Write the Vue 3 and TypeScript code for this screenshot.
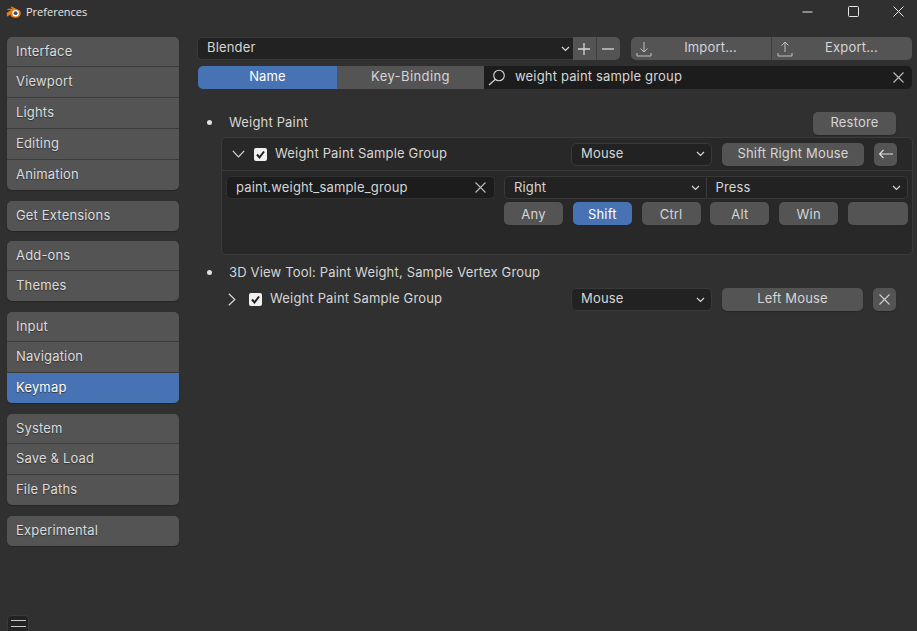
<script setup lang="ts">
const navGroups: { label: string; active?: boolean }[][] = [
  [{ label: 'Interface' }, { label: 'Viewport' }, { label: 'Lights' }, { label: 'Editing' }, { label: 'Animation' }],
  [{ label: 'Get Extensions' }],
  [{ label: 'Add-ons' }, { label: 'Themes' }],
  [{ label: 'Input' }, { label: 'Navigation' }, { label: 'Keymap', active: true }],
  [{ label: 'System' }, { label: 'Save & Load' }, { label: 'File Paths' }],
  [{ label: 'Experimental' }],
]
const modifiers = [
  { label: 'Any', on: false },
  { label: 'Shift', on: true },
  { label: 'Ctrl', on: false },
  { label: 'Alt', on: false },
  { label: 'Win', on: false },
  { label: '', on: false },
]
</script>

<template>
  <div class="window">
    <header class="titlebar">
      <svg class="logo" width="16" height="14" viewBox="0 0 16 14">
        <path d="M0.5 8 L5 5 L1.5 5 Q1 3.8 2 3.8 L6.5 3.8 L4.8 2.4 Q4.6 1.4 5.6 1.6 L10.5 4 Q14.8 5 14.8 8.2 Q14.4 12.6 9.6 12.8 Q5 13 4.4 9.6 L1.4 11.6 Q0 10.6 1 9.6 Z" fill="#e87d0d" />
        <circle cx="9.6" cy="8.2" r="3.2" fill="#fff" />
        <circle cx="9.6" cy="8.2" r="1.9" fill="#265787" />
      </svg>
      <span class="app-title">Preferences</span>
      <div class="winctl">
        <svg width="11" height="11" viewBox="0 0 11 11"><path d="M.5 6H10.500" stroke="#e6e6e6" fill="none" /></svg>
        <svg width="11" height="11" viewBox="0 0 11 11"><rect x=".5" y=".5" width="10" height="10" rx="1" stroke="#e6e6e6" fill="none" /></svg>
        <svg width="11" height="11" viewBox="0 0 11 11"><path d="M.5 .5L10.500 10.500M10.500 .5L.5 10.500" stroke="#e6e6e6" fill="none" /></svg>
      </div>
    </header>

    <div class="body">
      <aside class="sidebar">
        <div v-for="(group, i) in navGroups" :key="i" class="nav-group">
          <div v-for="item in group" :key="item.label" class="nav-item" :class="{ active: item.active }">{{ item.label }}</div>
        </div>
        <div class="hamburger">
          <svg width="15" height="8" viewBox="0 0 15 8"><path d="M0 .5H15M0 6.500H15" stroke="#c8c8c8" fill="none" /></svg>
        </div>
      </aside>

      <main class="content">
        <div class="toolbar">
          <div class="preset">
            <span>Blender</span>
            <svg class="caret" width="9" height="6" viewBox="0 0 9 6"><path d="M1 1L4.500 4.500L8 1" stroke="#d8d8d8" stroke-width="1.200" fill="none" /></svg>
          </div>
          <div class="pm">
            <button class="pm-btn"><svg width="14" height="14" viewBox="0 0 14 14"><path d="M7 1V13M1 7H13" stroke="#d8d8d8" stroke-width="1.300" fill="none" /></svg></button>
            <button class="pm-btn"><svg width="14" height="14" viewBox="0 0 14 14"><path d="M1 7H13" stroke="#d8d8d8" stroke-width="1.300" fill="none" /></svg></button>
          </div>
          <div class="io">
            <button class="io-btn import">
              <svg width="16" height="16" viewBox="0 0 16 16"><path d="M8 1V11M4.500 7.500L8 11L11.500 7.500M1 12V15H15V12" stroke="#c0c0c0" fill="none" /></svg>
              <span>Import...</span>
            </button>
            <button class="io-btn export">
              <svg width="16" height="16" viewBox="0 0 16 16"><path d="M8 11V1M4.500 4.500L8 1L11.500 4.500M1 12V15H15V12" stroke="#c0c0c0" fill="none" /></svg>
              <span>Export...</span>
            </button>
          </div>
        </div>

        <div class="searchbar">
          <div class="tab on">Name</div>
          <div class="tab keys">Key-Binding</div>
          <div class="search">
            <svg width="20" height="17" viewBox="0 0 20 17"><circle cx="12" cy="6.500" r="5.300" stroke="#d8d8d8" stroke-width="1.100" fill="none" /><path d="M8.200 10.500L2 16" stroke="#d8d8d8" stroke-width="1.200" fill="none" /></svg>
            <span class="search-text">weight paint sample group</span>
            <svg width="11" height="11" viewBox="0 0 11 11"><path d="M.5 .5L10.500 10.500M10.500 .5L.5 10.500" stroke="#bdbdbd" stroke-width="1.100" fill="none" /></svg>
          </div>
        </div>

        <section class="section first">
          <div class="section-head">
            <i class="bullet"></i>
            <span class="head-text">Weight Paint</span>
            <button class="btn restore">Restore</button>
          </div>

          <div class="box">
            <div class="box-head">
              <svg class="chev-down" width="13" height="8" viewBox="0 0 13 8"><path d="M.8 .8L6.500 6.800L12.200 .8" stroke="#d8d8d8" stroke-width="1.200" fill="none" /></svg>
              <span class="check"><svg width="13" height="13" viewBox="0 0 13 13"><path d="M3 6.500L5.500 9.500L10 3.500" stroke="#1f1f1f" stroke-width="2" fill="none" /></svg></span>
              <span class="kmi-name">Weight Paint Sample Group</span>
              <div class="dropdown mouse">
                <span>Mouse</span>
                <svg width="9" height="6" viewBox="0 0 9 6"><path d="M1 1L4.500 4.500L8 1" stroke="#d8d8d8" stroke-width="1.200" fill="none" /></svg>
              </div>
              <button class="btn binding">Shift Right Mouse</button>
              <button class="btn icon-btn">
                <svg width="16" height="10" viewBox="0 0 16 10"><path d="M15 5H1.500M5.500 1L1.500 5L5.500 9" stroke="#e0e0e0" stroke-width="1.100" fill="none" /></svg>
              </button>
            </div>
            <div class="box-body">
              <div class="op-field">
                <span>paint.weight_sample_group</span>
                <svg width="11" height="11" viewBox="0 0 11 11"><path d="M.5 .5L10.500 10.500M10.500 .5L.5 10.500" stroke="#bdbdbd" stroke-width="1.100" fill="none" /></svg>
              </div>
              <div class="key-col">
                <div class="key-row">
                  <div class="dropdown joined">
                    <span>Right</span>
                    <svg width="9" height="6" viewBox="0 0 9 6"><path d="M1 1L4.500 4.500L8 1" stroke="#d8d8d8" stroke-width="1.200" fill="none" /></svg>
                  </div>
                  <div class="dropdown joined">
                    <span>Press</span>
                    <svg width="9" height="6" viewBox="0 0 9 6"><path d="M1 1L4.500 4.500L8 1" stroke="#d8d8d8" stroke-width="1.200" fill="none" /></svg>
                  </div>
                </div>
                <div class="mods">
                  <button v-for="(m, i) in modifiers" :key="i" class="btn mod" :class="{ on: m.on }">{{ m.label }}</button>
                </div>
              </div>
            </div>
          </div>
        </section>

        <section class="section second">
          <div class="section-head">
            <i class="bullet"></i>
            <span class="head-text">3D View Tool: Paint Weight, Sample Vertex Group</span>
          </div>
          <div class="collapsed">
            <svg class="chev-right" width="8" height="13" viewBox="0 0 8 13"><path d="M.8 .8L6.800 6.500L.8 12.200" stroke="#d8d8d8" stroke-width="1.200" fill="none" /></svg>
            <span class="check"><svg width="13" height="13" viewBox="0 0 13 13"><path d="M3 6.500L5.500 9.500L10 3.500" stroke="#1f1f1f" stroke-width="2" fill="none" /></svg></span>
            <span class="kmi-name">Weight Paint Sample Group</span>
            <div class="dropdown mouse">
              <span>Mouse</span>
              <svg width="9" height="6" viewBox="0 0 9 6"><path d="M1 1L4.500 4.500L8 1" stroke="#d8d8d8" stroke-width="1.200" fill="none" /></svg>
            </div>
            <button class="btn binding">Left Mouse</button>
            <button class="btn icon-btn">
              <svg width="11" height="11" viewBox="0 0 11 11"><path d="M.5 .5L10.500 10.500M10.500 .5L.5 10.500" stroke="#d0d0d0" stroke-width="1.100" fill="none" /></svg>
            </button>
          </div>
        </section>
      </main>
    </div>
  </div>
</template>

<style>
html, body { margin: 0; background: #303030; overflow: hidden; }
</style>

<style scoped>
.window {
  width: 917px;
  height: 631px;
  overflow: hidden;
  background: #303030;
  color: #d6d6d6;
  font-family: Inter, "Liberation Sans", sans-serif;
  font-size: 13px;
  letter-spacing: 0.17px;
  display: flex;
  flex-direction: column;
}
button {
  font: inherit;
  letter-spacing: inherit;
  color: inherit;
  border: 0;
  padding: 0;
  margin: 0;
}
.titlebar {
  height: 37px;
  flex: none;
  display: flex;
  align-items: flex-start;
  padding: 5px 0 0 6px;
  box-sizing: border-box;
}
.logo { flex: none; }
.app-title {
  margin-left: 4px;
  font-family: "Open Sans", "Liberation Sans", sans-serif;
  font-size: 11px;
  letter-spacing: 0;
  color: #e8e8e8;
  line-height: 14px;
}
.winctl {
  margin-left: auto;
  display: flex;
  gap: 34.500px;
  padding: 1px 13px 0 0;
  height: 11px;
  align-items: center;
}
.body { flex: 1; display: flex; min-height: 0; }
.sidebar {
  width: 172px;
  margin-left: 7px;
  flex: none;
  display: flex;
  flex-direction: column;
  gap: 11px;
  height: 600px;
}
.nav-group {
  background: #545454;
  border-radius: 5px;
  overflow: hidden;
  box-shadow: 0 1px 1px #262626;
  flex: none;
}
.nav-group:nth-child(2) { margin-bottom: -1px; }
.nav-item {
  height: 31px;
  line-height: 29px;
  padding-left: 9px;
  box-sizing: border-box;
  border-bottom: 1px solid #3c3c3c;
  color: #dcdcdc;
  text-shadow: 0 1px 1px #333;
}
.nav-item:first-child { height: 30px; }
.nav-item:last-child { border-bottom: 0; height: 30px; }
.nav-item.active { background: #4772b3; color: #fff; }
.hamburger {
  margin-top: auto;
  width: 22px;
  height: 22px;
  flex: none;
  background: #232323;
  border: 1px solid #3a3a3a;
  border-radius: 4px;
  box-sizing: border-box;
  display: flex;
  justify-content: center;
  padding-top: 4px;
}
.content {
  margin-left: 18px;
  width: 715px;
  flex: none;
  display: flex;
  flex-direction: column;
}
.toolbar { display: flex; height: 23px; }
.preset {
  width: 376px;
  box-sizing: border-box;
  background: #222;
  border: 1px solid #393939;
  border-right: 0;
  border-radius: 5px 0 0 5px;
  display: flex;
  align-items: center;
  justify-content: space-between;
  padding: 0 3px 0 9px;
}
.preset span { margin-bottom: 4px; }
.pm { display: flex; margin-right: 11px; }
.pm-btn {
  width: 23.500px;
  height: 23px;
  background: #545454;
  display: flex;
  align-items: center;
  justify-content: center;
  border-right: 1px solid #3f3f3f;
}
.pm-btn:last-child { border-right: 0; border-radius: 0 5px 5px 0; }
.io { display: flex; width: 281px; }
.io-btn {
  flex: 1;
  height: 23px;
  background: #545454;
  display: flex;
  align-items: center;
  padding-left: 5px;
  box-sizing: border-box;
}
.io-btn span { flex: 1; text-align: center; margin-bottom: 4px; padding-right: 2px; }
.import { border-radius: 5px 0 0 5px; border-right: 1px solid #3f3f3f; }
.export { border-radius: 0 5px 5px 0; }
.searchbar { display: flex; height: 23px; margin-top: 6px; margin-left: 1px; }
.tab {
  background: #545454;
  text-align: center;
  line-height: 20px;
  width: 147px;
  flex: none;
}
.tab.keys { letter-spacing: 0.4px; }
.tab.on { background: #4772b3; color: #fff; width: 139px; border-radius: 5px 0 0 5px; }
.search {
  flex: 1;
  background: #1c1c1c;
  border-radius: 0 5px 5px 0;
  display: flex;
  align-items: center;
  padding: 0 8px 0 3px;
}
.search-text { flex: 1; margin: 0 0 3px 8px; }
.section-head {
  height: 23px;
  display: flex;
  align-items: center;
  margin-left: 8px;
}
.head-text { margin-bottom: 3px; }
.first { margin-top: 23px; }
.bullet {
  width: 5px;
  height: 5px;
  background: #e0e0e0;
  border-radius: 50%;
  margin: 0 17px 3px 2px;
  flex: none;
}
.second .head-text, .second .bullet { margin-bottom: 1px; }
.btn {
  background: #545454;
  border-radius: 5px;
  height: 23px;
  text-align: center;
  box-shadow: 0 1px 1px #272727;
  display: flex;
  align-items: center;
  justify-content: center;
  padding-bottom: 2px;
}
.restore { width: 83px; margin-left: auto; margin-right: 16px; padding-bottom: 3px; }
.box {
  margin: 2px 0 0 24px;
  width: 692px;
  height: 118px;
  box-sizing: border-box;
  border: 1px solid #3b3b3b;
  border-radius: 5px;
  background: #282828;
}
.box-head {
  height: 33px;
  box-sizing: border-box;
  border-bottom: 1px solid #3b3b3b;
  display: flex;
  align-items: center;
  padding: 0 0 0 10px;
}
.chev-down { flex: none; }
.check {
  width: 13px;
  height: 13px;
  background: #f0f0f0;
  border-radius: 2px;
  flex: none;
  display: flex;
}
.box-head .check { margin-left: 9px; }
.kmi-name { margin: 0 0 2px 8px; flex: 1; min-width: 0; }
.collapsed .kmi-name { margin-bottom: 3px; }
.dropdown {
  height: 23px;
  box-sizing: border-box;
  background: #222;
  border: 1px solid #393939;
  border-radius: 5px;
  display: flex;
  align-items: center;
  justify-content: space-between;
  padding: 0 6px 0 9px;
}
.dropdown span { margin-bottom: 3px; }
.key-row .dropdown span, .op-field span { margin-bottom: 1px; }
.mouse { width: 141px; flex: none; }
.binding { width: 142px; margin-left: 10px; flex: none; }
.icon-btn { width: 23px; margin-left: 10px; flex: none; padding-bottom: 0; }
.box-head .icon-btn { margin-right: 15px; }
.box-body { display: flex; padding: 5px 4px 0 4px; }
.op-field {
  width: 269px;
  height: 23px;
  box-sizing: border-box;
  background: #1c1c1c;
  border: 1px solid #313131;
  border-radius: 5px;
  display: flex;
  align-items: center;
  justify-content: space-between;
  padding: 0 8px 0 9px;
  flex: none;
}
.key-col { margin-left: 9px; width: 404px; flex: none; }
.key-row { display: flex; }
.key-row .joined { flex: 1; }
.key-row .joined:first-child { border-radius: 5px 0 0 5px; border-right-color: #3b3b3b; }
.key-row .joined:last-child { border-radius: 0 5px 5px 0; border-left: 0; }
.mods { display: flex; justify-content: space-between; margin-top: 3px; }
.mod { width: 59px; padding-bottom: 0; }
.mod:last-child { width: 60px; }
.mod.on { background: #4772b3; color: #fff; }
.second { margin-top: 6px; }
.collapsed {
  display: flex;
  align-items: center;
  height: 23px;
  margin: 4px 0 0 31px;
  width: 668px;
}
.collapsed .check { margin-left: 13px; }
.collapsed .binding { width: 141px; padding-bottom: 3px; }
</style>
